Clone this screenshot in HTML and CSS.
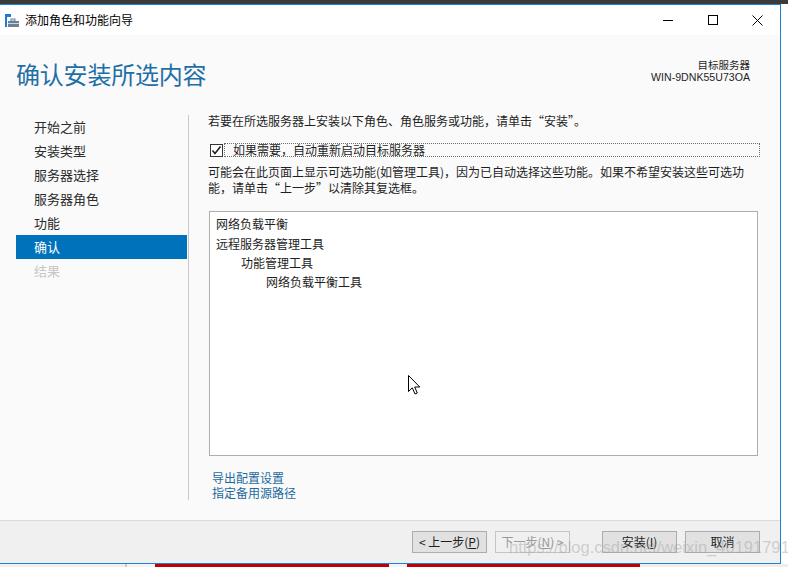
FILE: index.html
```html
<!DOCTYPE html>
<html lang="zh-CN">
<head>
<meta charset="utf-8">
<title>添加角色和功能向导</title>
<link rel="stylesheet" href="styles.css">
</head>
<body>
<div class="topstrip"></div>
<div class="window">
  <div class="titlebar">
    <svg class="app-icon" width="16" height="16" viewBox="0 0 16 16">
      <rect x="1" y="1" width="6" height="3" fill="#1f7bd2"/>
      <rect x="1" y="4" width="2" height="10" fill="#1f7bd2"/>
      <rect x="7" y="6" width="4" height="2" fill="none" stroke="#6b8094" stroke-width="1"/>
      <rect x="4" y="8" width="11" height="6" fill="#6b8094"/>
      <rect x="4" y="10" width="11" height="1" fill="#c9d3dc"/>
    </svg>
    <span class="title">添加角色和功能向导</span>
    <div class="controls">
      <span class="ctl"><svg width="10" height="10" viewBox="0 0 10 10"><line x1="0" y1="5.5" x2="10" y2="5.5" stroke="#000" stroke-width="1"/></svg></span>
      <span class="ctl"><svg width="10" height="10" viewBox="0 0 10 10"><rect x="0.5" y="0.5" width="9" height="9" fill="none" stroke="#000" stroke-width="1"/></svg></span>
      <span class="ctl"><svg width="11" height="11" viewBox="0 0 11 11"><path d="M0.5 0.5 L10.5 10.5 M10.5 0.5 L0.5 10.5" stroke="#000" stroke-width="1"/></svg></span>
    </div>
  </div>

  <div class="header">
    <h1 class="heading">确认安装所选内容</h1>
    <div class="target">
      <div class="target-label">目标服务器</div>
      <div class="target-name">WIN-9DNK55U73OA</div>
    </div>
  </div>

  <div class="main">
    <ul class="nav">
      <li class="nav-item">开始之前</li>
      <li class="nav-item">安装类型</li>
      <li class="nav-item">服务器选择</li>
      <li class="nav-item">服务器角色</li>
      <li class="nav-item">功能</li>
      <li class="nav-item active">确认</li>
      <li class="nav-item disabled">结果</li>
    </ul>
    <div class="content">
      <p class="intro">若要在所选服务器上安装以下角色、角色服务或功能，请单击“安装”。</p>
      <div class="check-row">
        <span class="checkbox"><svg width="11" height="11" viewBox="0 0 11 11"><path d="M1.5 5.5 L4 8.5 L9.5 1.5" fill="none" stroke="#222" stroke-width="1.6"/></svg></span>
        <span class="check-label">如果需要，自动重新启动目标服务器</span>
      </div>
      <p class="note">可能会在此页面上显示可选功能(如管理工具)，因为已自动选择这些功能。如果不希望安装这些可选功能，请单击“上一步”以清除其复选框。</p>
      <div class="listbox">
        <div class="li l0 first">网络负载平衡</div>
        <div class="li l0 second">远程服务器管理工具</div>
        <div class="li l1">功能管理工具</div>
        <div class="li l2">网络负载平衡工具</div>
        <svg class="cursor" width="13" height="20" viewBox="0 0 13 20">
          <path d="M0.5 0.5 L0.5 16.5 L4.3 12.8 L7 19 L9.3 18 L6.7 12 L11.8 12 Z" fill="#fff" stroke="#000" stroke-width="1" stroke-linejoin="miter"/>
        </svg>
      </div>
      <div class="links">
        <a class="link">导出配置设置</a>
        <a class="link">指定备用源路径</a>
      </div>
    </div>
  </div>

  <div class="footer">
    <button class="btn">&lt; 上一步(<u>P</u>)</button>
    <button class="btn disabled">下一步(<u>N</u>) &gt;</button>
    <button class="btn primary">安装(<u>I</u>)</button>
    <button class="btn">取消</button>
    <span class="watermark">https://blog.csdn.net/weixin_40191791</span>
  </div>
</div>
<div class="bottomstrip">
  <span class="seg s1"></span>
  <span class="seg s2"></span>
  <span class="seg s3"></span>
  <span class="seg s4"></span>
  <span class="seg s5"></span>
  <span class="seg s6"></span>
  <span class="seg s7"></span>
</div>
</body>
</html>
```
FILE: styles.css
```css
* { box-sizing: border-box; }
html, body { margin: 0; padding: 0; }
body {
  width: 788px;
  height: 567px;
  overflow: hidden;
  background: #ffffff;
  font-family: "Noto Sans CJK SC", "Noto Sans", sans-serif;
  font-size: 12px;
  color: #1e1e1e;
}
.topstrip { height: 4px; background: #3b3b3b; }

.window {
  width: 781px;
  height: 560px;
  border-top: 1px solid #1883d7;
  border-right: 1px solid #1883d7;
  border-bottom: 1px solid #1883d7;
  background: #fafafa;
  display: flex;
  flex-direction: column;
}

.titlebar {
  height: 30px;
  background: #ffffff;
  display: flex;
  align-items: center;
  flex: none;
}
.app-icon { margin-left: 4px; margin-top: 1px; }
.title { margin-left: 5px; font-size: 12px; line-height: 14px; color: #000; }
.controls { margin-left: auto; display: flex; height: 30px; }
.ctl {
  width: 45px;
  height: 30px;
  display: flex;
  align-items: center;
  justify-content: center;
}

.header {
  height: 80px;
  flex: none;
  display: flex;
  align-items: flex-start;
  padding: 0 30px 0 16px;
}
.heading {
  margin: 24px 0 0 0;
  font-size: 24px;
  line-height: 30px;
  font-weight: normal;
  color: #1e6fa6;
  letter-spacing: -0.2px;
}
.target { margin-left: auto; margin-top: 23px; text-align: right; }
.target-label { font-size: 10.5px; line-height: 13px; color: #1e1e1e; }
.target-name { font-family: "Liberation Sans", Arial, sans-serif; font-size: 10.6px; line-height: 13px; color: #1e1e1e; }

.main {
  height: 405px;
  flex: none;
  display: flex;
}
.nav {
  list-style: none;
  margin: 0;
  padding: 0 0 0 16px;
  width: 188px;
  flex: none;
}
.nav-item {
  width: 171px;
  height: 24px;
  line-height: 24px;
  padding-left: 18px;
  font-size: 13px;
  color: #2b2b2b;
}
.nav-item.active { background: #0072bc; color: #ffffff; }
.nav-item.disabled { color: #c6c6c6; }

.content {
  height: 385px;
  width: 592px;
  border-left: 1px solid #c8c8c8;
  padding-left: 19px;
  position: relative;
}
.intro { margin: 0; line-height: 12px; }
.check-row {
  margin-top: 15px;
  height: 16px;
  display: flex;
  align-items: center;
}
.checkbox {
  width: 13px;
  height: 13px;
  margin-left: 2px;
  border: 1px solid #333;
  background: #fff;
  display: flex;
  align-items: center;
  justify-content: center;
  flex: none;
}
.check-label {
  margin-left: 1px;
  width: 536px;
  height: 14px;
  line-height: 12px;
  border: 1px dotted #6e6e6e;
  padding-left: 8px;
  flex: none;
}
.note { margin: 6px 0 0 0; width: 540px; line-height: 16px; }

.listbox {
  position: relative;
  margin: 15px 0 0 1px;
  width: 549px;
  height: 245px;
  border: 1px solid #adadad;
  background: #ffffff;
  padding-top: 2px;
}
.li { line-height: 19px; height: 19px; padding-left: 6px; }
.li.second { margin-top: 1px; }
.li.l1 { padding-left: 31px; }
.li.l2 { padding-left: 56px; }
.cursor { position: absolute; left: 198px; top: 163px; }

.links { margin: 14px 0 0 4px; display: flex; flex-direction: column; }
.link { line-height: 15px; color: #1d6aa1; cursor: pointer; }

.footer {
  position: relative;
  height: 43px;
  flex: none;
  border-top: 1px solid #dadada;
  background: #f0f0f0;
  display: flex;
  align-items: flex-start;
  padding: 10px 0 0 412px;
}
.btn {
  width: 75px;
  height: 22px;
  padding: 0;
  border: 1px solid #adadad;
  background: #e1e1e1;
  font-family: "Noto Sans CJK SC", "Noto Sans", sans-serif;
  font-size: 12px;
  line-height: 18px;
  color: #1e1e1e;
  margin-right: 8px;
}
.btn u { text-decoration: underline; }
.btn.disabled { border-color: #c4c4c4; background: #f0f0f0; color: #9a9a9a; }
.btn.primary { margin-left: 24px; }
.watermark {
  position: absolute;
  left: 509px;
  top: 17px;
  font-family: "Liberation Sans", Arial, sans-serif;
  font-size: 16.5px;
  line-height: 18px;
  color: rgba(160, 160, 160, 0.45);
  white-space: nowrap;
}

.bottomstrip { display: flex; height: 3px; }
.seg { display: block; height: 3px; }
.s1 { width: 125px; background: #f0f0f0; }
.s2 { width: 2px; background: #c8c8c8; }
.s3 { width: 28px; background: #f5f5f5; }
.s4 { width: 234px; background: #c00000; }
.s5 { width: 18px; background: #f3f3f3; }
.s6 { width: 233px; background: #c00000; }
.s7 { width: 148px; background: #eeeeee; }
```
